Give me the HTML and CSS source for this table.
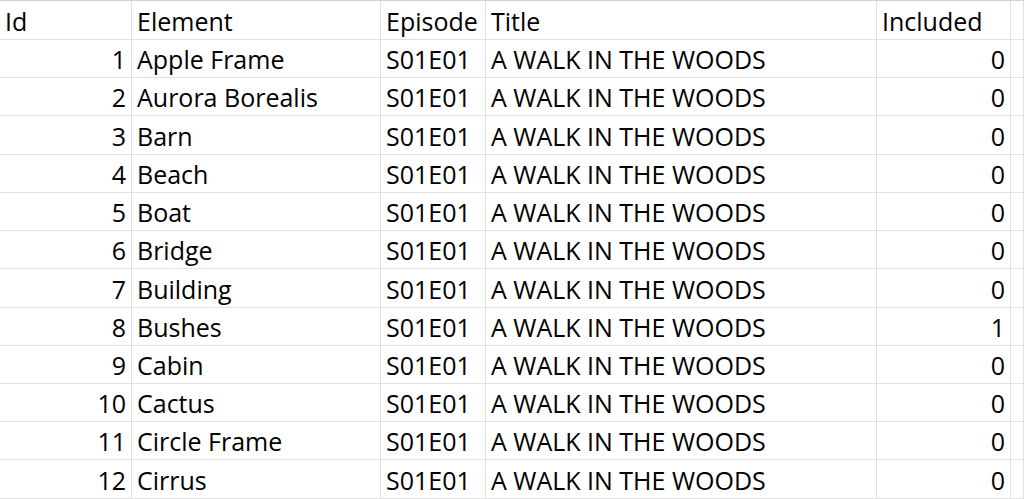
FILE: index.html
```html
<!DOCTYPE html>
<html>
<head>
<meta charset="utf-8">
<link rel="stylesheet" href="styles.css">
</head>
<body>
<div class="sheet">
  <div class="cell head">Id</div><div class="cell head">Element</div><div class="cell head">Episode</div><div class="cell head">Title</div><div class="cell head">Included</div><div class="cell head"></div>

  <div class="cell num">1</div><div class="cell">Apple Frame</div><div class="cell">S01E01</div><div class="cell">A WALK IN THE WOODS</div><div class="cell num">0</div><div class="cell"></div>
  <div class="cell num">2</div><div class="cell">Aurora Borealis</div><div class="cell">S01E01</div><div class="cell">A WALK IN THE WOODS</div><div class="cell num">0</div><div class="cell"></div>
  <div class="cell num">3</div><div class="cell">Barn</div><div class="cell">S01E01</div><div class="cell">A WALK IN THE WOODS</div><div class="cell num">0</div><div class="cell"></div>
  <div class="cell num">4</div><div class="cell">Beach</div><div class="cell">S01E01</div><div class="cell">A WALK IN THE WOODS</div><div class="cell num">0</div><div class="cell"></div>
  <div class="cell num">5</div><div class="cell">Boat</div><div class="cell">S01E01</div><div class="cell">A WALK IN THE WOODS</div><div class="cell num">0</div><div class="cell"></div>
  <div class="cell num">6</div><div class="cell">Bridge</div><div class="cell">S01E01</div><div class="cell">A WALK IN THE WOODS</div><div class="cell num">0</div><div class="cell"></div>
  <div class="cell num">7</div><div class="cell">Building</div><div class="cell">S01E01</div><div class="cell">A WALK IN THE WOODS</div><div class="cell num">0</div><div class="cell"></div>
  <div class="cell num">8</div><div class="cell">Bushes</div><div class="cell">S01E01</div><div class="cell">A WALK IN THE WOODS</div><div class="cell num">1</div><div class="cell"></div>
  <div class="cell num">9</div><div class="cell">Cabin</div><div class="cell">S01E01</div><div class="cell">A WALK IN THE WOODS</div><div class="cell num">0</div><div class="cell"></div>
  <div class="cell num">10</div><div class="cell">Cactus</div><div class="cell">S01E01</div><div class="cell">A WALK IN THE WOODS</div><div class="cell num">0</div><div class="cell"></div>
  <div class="cell num">11</div><div class="cell">Circle Frame</div><div class="cell">S01E01</div><div class="cell">A WALK IN THE WOODS</div><div class="cell num">0</div><div class="cell"></div>
  <div class="cell num">12</div><div class="cell">Cirrus</div><div class="cell">S01E01</div><div class="cell">A WALK IN THE WOODS</div><div class="cell num">0</div><div class="cell"></div>
</div>
</body>
</html>
```
FILE: styles.css
```css
html, body {
  margin: 0;
  padding: 0;
  background: #ffffff;
}

body {
  font-family: "Open Sans", "Liberation Sans", Arial, sans-serif;
  font-size: 25px;
  color: #000000;
  overflow: hidden;
}

.sheet {
  display: grid;
  grid-template-columns: 132px 249px 105px 391px 134px 1fr;
  grid-template-rows: 40px;
  grid-auto-rows: 38.22px;
  width: 1024px;
}

.cell {
  box-sizing: border-box;
  display: flex;
  align-items: flex-end;
  padding: 0 4px 5px 5px;
  line-height: 1;
  white-space: nowrap;
  overflow: hidden;
  border-right: 1px solid #e1e1e1;
  border-bottom: 1px solid #e1e1e1;
}

.head {
  border-top: 1px solid #d0d0d0;
}

.num {
  justify-content: flex-end;
  padding-right: 5px;
}
```
